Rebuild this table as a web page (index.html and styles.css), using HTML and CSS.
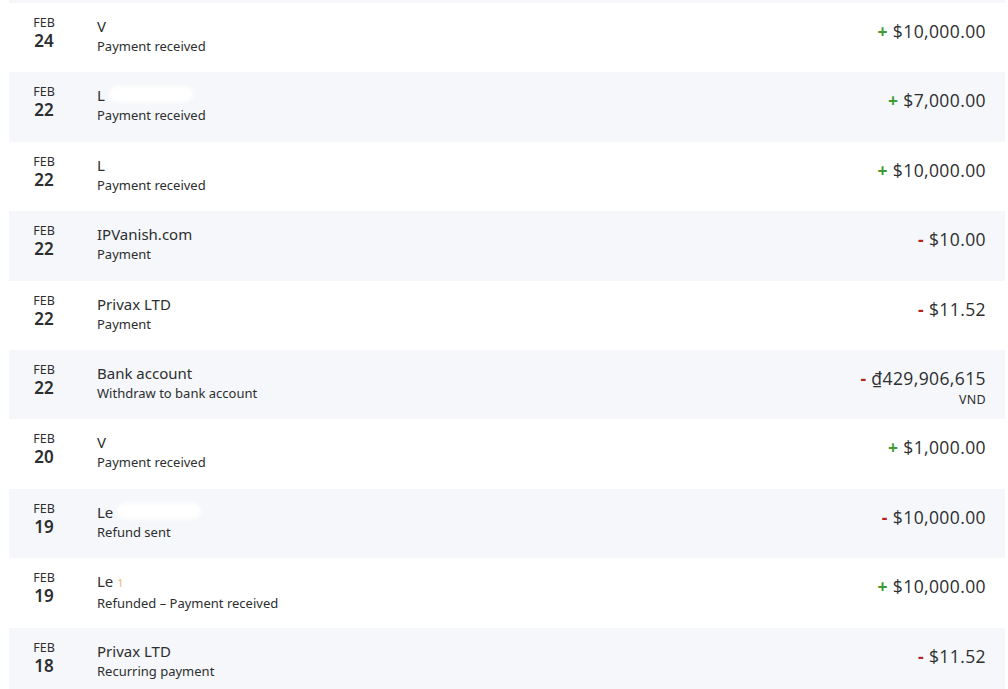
FILE: index.html
```html
<!DOCTYPE html>
<html lang="en">

<head>
    <meta charset="UTF-8">
    <title>Activity</title>
    <link rel="stylesheet" href="styles.css">
</head>

<body>
    <div class="activity">
        <div class="edge"></div>

        <div class="row">
            <div class="date"><span class="month">FEB</span><span class="day">24</span></div>
            <div class="info">
                <div class="name">V</div>
                <div class="type">Payment received</div>
            </div>
            <div class="amount"><span class="sign plus">+</span> $10,000.00</div>
        </div>

        <div class="row alt">
            <div class="date"><span class="month">FEB</span><span class="day">22</span></div>
            <div class="info">
                <div class="name">L<span class="redact"></span></div>
                <div class="type">Payment received</div>
            </div>
            <div class="amount"><span class="sign plus">+</span> $7,000.00</div>
        </div>

        <div class="row">
            <div class="date"><span class="month">FEB</span><span class="day">22</span></div>
            <div class="info">
                <div class="name">L</div>
                <div class="type">Payment received</div>
            </div>
            <div class="amount"><span class="sign plus">+</span> $10,000.00</div>
        </div>

        <div class="row alt">
            <div class="date"><span class="month">FEB</span><span class="day">22</span></div>
            <div class="info">
                <div class="name">IPVanish.com</div>
                <div class="type">Payment</div>
            </div>
            <div class="amount"><span class="sign minus">-</span> $10.00</div>
        </div>

        <div class="row">
            <div class="date"><span class="month">FEB</span><span class="day">22</span></div>
            <div class="info">
                <div class="name">Privax LTD</div>
                <div class="type">Payment</div>
            </div>
            <div class="amount"><span class="sign minus">-</span> $11.52</div>
        </div>

        <div class="row alt">
            <div class="date"><span class="month">FEB</span><span class="day">22</span></div>
            <div class="info">
                <div class="name">Bank account</div>
                <div class="type">Withdraw to bank account</div>
            </div>
            <div class="amount">
                <span class="sign minus">-</span> ₫429,906,615
                <span class="currency">VND</span>
            </div>
        </div>

        <div class="row">
            <div class="date"><span class="month">FEB</span><span class="day">20</span></div>
            <div class="info">
                <div class="name">V</div>
                <div class="type">Payment received</div>
            </div>
            <div class="amount"><span class="sign plus">+</span> $1,000.00</div>
        </div>

        <div class="row alt">
            <div class="date"><span class="month">FEB</span><span class="day">19</span></div>
            <div class="info">
                <div class="name">Le<span class="redact"></span></div>
                <div class="type">Refund sent</div>
            </div>
            <div class="amount"><span class="sign minus">-</span> $10,000.00</div>
        </div>

        <div class="row">
            <div class="date"><span class="month">FEB</span><span class="day">19</span></div>
            <div class="info">
                <div class="name">Le <span class="trace">1</span></div>
                <div class="type">Refunded – Payment received</div>
            </div>
            <div class="amount"><span class="sign plus">+</span> $10,000.00</div>
        </div>

        <div class="row alt">
            <div class="date"><span class="month">FEB</span><span class="day">18</span></div>
            <div class="info">
                <div class="name">Privax LTD</div>
                <div class="type">Recurring payment</div>
            </div>
            <div class="amount"><span class="sign minus">-</span> $11.52</div>
        </div>
    </div>
</body>

</html>
```

FILE: styles.css
```css
/* Page */
body {
    margin: 0;
    background-color: #fff;
    color: #2c2e2f;
    font-family: 'Noto Sans', 'Open Sans', sans-serif;
}

/* Activity list */
.activity {
    margin-left: 9px;
    width: 996px;
}

.edge {
    height: 3px;
    background-color: #f5f7fa;
}

.row {
    display: flex;
    align-items: flex-start;
    height: 69.4px;
    box-sizing: border-box;
    padding: 12px 19px 0 0;
    background-color: #fff;
}

.row.alt {
    background-color: #f5f7fa;
}

/* Date */
.date {
    width: 70px;
    display: flex;
    flex-direction: column;
    align-items: center;
}

.month {
    font-size: 12.5px;
    line-height: 16px;
}

.day {
    font-size: 17px;
    font-weight: 600;
    line-height: 20px;
}

/* Name and type */
.info {
    flex: 1;
    padding-left: 18px;
}

.name {
    font-size: 15px;
    line-height: 20px;
    padding-top: 1px;
    position: relative;
}

.type {
    font-size: 13px;
    line-height: 18px;
    padding-top: 1px;
}

.redact {
    position: absolute;
    top: 2px;
    margin-left: 4px;
    width: 84px;
    height: 16px;
    background-color: #fff;
    border-radius: 8px;
    filter: blur(2px);
}

.trace {
    color: #e8b87a;
    font-size: 11px;
}

/* Amount */
.amount {
    font-family: 'Open Sans', sans-serif;
    font-size: 17.5px;
    line-height: 20px;
    padding-top: 6px;
    text-align: right;
    letter-spacing: 0.4px;
}

.sign {
    font-weight: 700;
}

.plus {
    color: #3f9c35;
}

.minus {
    color: #b1251c;
}

.currency {
    display: block;
    margin-top: 3px;
    font-family: 'Noto Sans', sans-serif;
    font-size: 12.5px;
    line-height: 17px;
    letter-spacing: 0.3px;
}
```
